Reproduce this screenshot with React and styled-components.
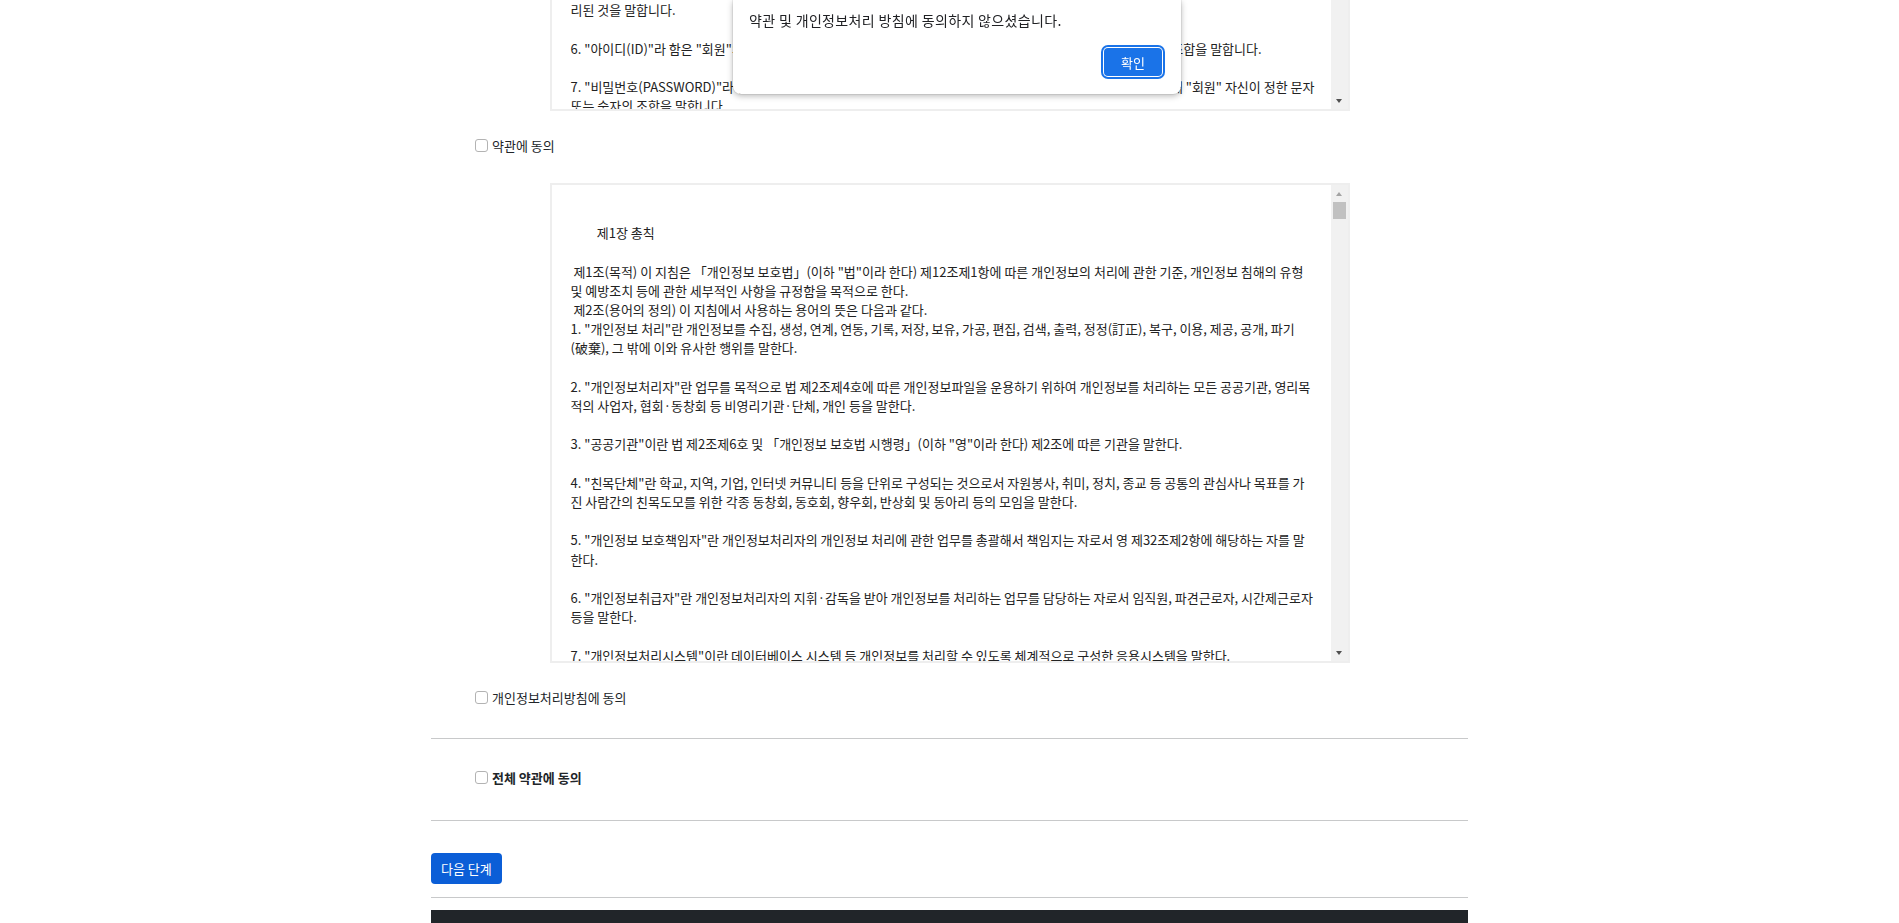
import React, { useLayoutEffect, useRef } from "react";
import styled, { createGlobalStyle } from "styled-components";

const GlobalStyle = createGlobalStyle`
  html, body { margin: 0; padding: 0; background: #ffffff; }
  body {
    font-family: "Noto Sans CJK KR", "Noto Sans", sans-serif;
    color: #212529;
  }
`;

const SERVICE_TERMS = [
  "제1조(목적)",
  '이 약관은 회사가 운영하는 온라인 서비스(이하 "서비스"라 한다)를 이용함에 있어 회사와 회원의 권리, 의무 및 책임사항을 규정함을',
  "목적으로 합니다.",
  "",
  "제2조(정의)",
  "이 약관에서 사용하는 용어의 정의는 다음과 같습니다.",
  '1. "서비스"라 함은 구현되는 단말기(PC, TV, 휴대형단말기 등의 각종 유무선 장치를 포함)와 상관없이 "회원"이 이용할 수 있는',
  "제반 서비스를 의미합니다.",
  "",
  '2. "회원"이라 함은 회사의 "서비스"에 접속하여 이 약관에 따라 "회사"와 이용계약을 체결하고 "회사"가 제공하는 "서비스"를',
  "이용하는 고객을 말합니다.",
  "",
  '3. "이용계약"이라 함은 "서비스" 이용과 관련하여 "회사"와 "회원" 간에 체결하는 계약을 말합니다.',
  "",
  '4. "이용자"라 함은 "회사"가 제공하는 "서비스"를 받는 "회원" 및 비회원을 말합니다.',
  "",
  '5. "게시물"이라 함은 "회원"이 "서비스"를 이용함에 있어 "서비스상"에 게시한 부호·문자·음성 형태의 글, 사진, 동영상 및 각종 파일과 링크 등으로 처',
  "리된 것을 말합니다.",
  "",
  '6. "아이디(ID)"라 함은 "회원"의 식별과 서비스 이용을 위하여 "회원"이 정하고 "회사"가 승인하는 문자와 숫자의 조합을 말합니다.',
  "",
  '7. "비밀번호(PASSWORD)"라 함은 "회원"이 부여 받은 "아이디"와 일치되는 "회원"임을 확인하고 비밀보호를 위해 "회원" 자신이 정한 문자',
  "또는 숫자의 조합을 말합니다.",
  "",
  '8. "탈퇴"라 함은 "회원"이 이용계약을 해지하는 것을 말합니다.',
  "",
  "제3조(약관의 효력 및 변경)",
  '1. 이 약관은 "서비스" 화면에 게시하거나 기타의 방법으로 "회원"에게 공지함으로써 효력이 발생합니다.',
];

const PRIVACY_POLICY = [
  "",
  "         제1장 총칙",
  "",
  ' 제1조(목적) 이 지침은 「개인정보 보호법」(이하 "법"이라 한다) 제12조제1항에 따른 개인정보의 처리에 관한 기준, 개인정보 침해의 유형',
  "및 예방조치 등에 관한 세부적인 사항을 규정함을 목적으로 한다.",
  " 제2조(용어의 정의) 이 지침에서 사용하는 용어의 뜻은 다음과 같다.",
  '1. "개인정보 처리"란 개인정보를 수집, 생성, 연계, 연동, 기록, 저장, 보유, 가공, 편집, 검색, 출력, 정정(訂正), 복구, 이용, 제공, 공개, 파기',
  "(破棄), 그 밖에 이와 유사한 행위를 말한다.",
  "",
  '2. "개인정보처리자"란 업무를 목적으로 법 제2조제4호에 따른 개인정보파일을 운용하기 위하여 개인정보를 처리하는 모든 공공기관, 영리목',
  "적의 사업자, 협회·동창회 등 비영리기관·단체, 개인 등을 말한다.",
  "",
  '3. "공공기관"이란 법 제2조제6호 및 「개인정보 보호법 시행령」(이하 "영"이라 한다) 제2조에 따른 기관을 말한다.',
  "",
  '4. "친목단체"란 학교, 지역, 기업, 인터넷 커뮤니티 등을 단위로 구성되는 것으로서 자원봉사, 취미, 정치, 종교 등 공통의 관심사나 목표를 가',
  "진 사람간의 친목도모를 위한 각종 동창회, 동호회, 향우회, 반상회 및 동아리 등의 모임을 말한다.",
  "",
  '5. "개인정보 보호책임자"란 개인정보처리자의 개인정보 처리에 관한 업무를 총괄해서 책임지는 자로서 영 제32조제2항에 해당하는 자를 말',
  "한다.",
  "",
  '6. "개인정보취급자"란 개인정보처리자의 지휘·감독을 받아 개인정보를 처리하는 업무를 담당하는 자로서 임직원, 파견근로자, 시간제근로자',
  "등을 말한다.",
  "",
  '7. "개인정보처리시스템"이란 데이터베이스 시스템 등 개인정보를 처리할 수 있도록 체계적으로 구성한 응용시스템을 말한다.',
  "",
  '8. "위탁자"란 개인정보 처리 업무를 위탁하는 개인정보처리자를 말한다.',
  "",
  '9. "수탁자"란 개인정보처리자로부터 개인정보 처리 업무를 위탁받은 자를 말한다.',
];

const LINE = 19.2;
const PAD = 19;

const Page = styled.main`
  width: 1037px;
  margin: 0 auto;
`;

const TermsBlock = styled.section`
  display: flex;
  flex-direction: column;
  margin-bottom: ${(p) => p.$after}px;
`;

const BoxFrame = styled.div`
  width: 800px;
  height: ${(p) => p.$height}px;
  margin: 0 auto;
  box-sizing: border-box;
  display: flex;
  background: #ffffff;
  border: 2px solid #eeeeee;
  border-top-width: ${(p) => (p.$cut ? 0 : 2)}px;
`;

const TermsText = styled.div`
  flex: 1;
  min-width: 0;
  overflow-x: hidden;
  overflow-y: scroll;
  scrollbar-width: none;
  &::-webkit-scrollbar { display: none; }
  padding: ${PAD}px;
  white-space: pre;
  font-size: 13px;
  line-height: ${LINE}px;
  color: #222222;
`;

const Rail = styled.div`
  width: 17px;
  flex: none;
  display: flex;
  flex-direction: column;
  background: #f1f1f1;
`;

const RailButton = styled.div`
  height: 17px;
  flex: none;
  display: flex;
  align-items: center;
  justify-content: center;
`;

const Arrow = styled.span`
  width: 0;
  height: 0;
  border-left: 3.5px solid transparent;
  border-right: 3.5px solid transparent;
  ${(p) =>
    p.$dir === "up"
      ? `border-bottom: 4px solid ${p.$color};`
      : `border-top: 4px solid ${p.$color};`}
`;

const Track = styled.div`
  flex: 1;
  display: flex;
  flex-direction: column;
`;

const Thumb = styled.div`
  height: 17px;
  margin: 0 2px;
  background: #c1c1c1;
`;

const CheckRow = styled.label`
  display: flex;
  align-items: center;
  gap: 4px;
  height: 20px;
  margin-top: ${(p) => p.$top || 0}px;
  padding-left: 44px;
  font-size: 13px;
  font-weight: ${(p) => (p.$bold ? 700 : 400)};
  color: #212529;
  cursor: pointer;
`;

const CheckBox = styled.input.attrs({ type: "checkbox" })`
  appearance: none;
  -webkit-appearance: none;
  box-sizing: border-box;
  width: 13px;
  height: 13px;
  margin: 0;
  border: 1px solid #b3b3b3;
  border-radius: 3px;
  background: #ffffff;
`;

const Divider = styled.hr`
  margin: 0;
  border: 0;
  height: 1px;
  background: #c8c9ca;
`;

const AllAgree = styled.div`
  padding: 28px 0 33px;
`;

const ButtonBar = styled.div`
  display: flex;
  padding: 32px 0 13px;
`;

const NextButton = styled.button`
  height: 31px;
  padding: 0 10px;
  border: 0;
  border-radius: 4px;
  background: #0b5ed7;
  color: #ffffff;
  font-family: inherit;
  font-size: 13px;
  cursor: pointer;
`;

const Footer = styled.footer`
  margin-top: 12px;
  height: 120px;
  background: #212529;
`;

const AlertDialog = styled.div`
  position: fixed;
  top: 0;
  left: 733px;
  width: 448px;
  height: 94px;
  box-sizing: border-box;
  padding: 10px 16px 15px;
  display: flex;
  flex-direction: column;
  justify-content: space-between;
  background: #ffffff;
  border-radius: 0 0 8px 8px;
  box-shadow: 0 2px 6px rgba(0, 0, 0, 0.28), 0 0 0 1px rgba(0, 0, 0, 0.06);
`;

const AlertMessage = styled.p`
  margin: 0;
  font-size: 14px;
  letter-spacing: 0.35px;
  line-height: 20px;
  color: #202124;
`;

const AlertActions = styled.div`
  display: flex;
  justify-content: flex-end;
  padding: 0 3px 3px 0;
`;

const AlertButton = styled.button`
  width: 58px;
  height: 28px;
  border: 0;
  border-radius: 4px;
  background: #1a73e8;
  color: #ffffff;
  font-family: inherit;
  font-size: 13px;
  box-shadow: 0 0 0 1px #ffffff, 0 0 0 3px #1a73e8;
`;

function ScrollRail({ showUp, thumb }) {
  return (
    <Rail>
      {showUp && (
        <RailButton>
          <Arrow $dir="up" $color="#a3a3a3" />
        </RailButton>
      )}
      <Track>{thumb && <Thumb />}</Track>
      <RailButton>
        <Arrow $dir="down" $color="#505050" />
      </RailButton>
    </Rail>
  );
}

function TermsBox({ lines, height, cut, startLine = 0, topOffset = 0 }) {
  const ref = useRef(null);
  useLayoutEffect(() => {
    if (ref.current && startLine > 0) {
      ref.current.scrollTop = PAD + startLine * LINE - topOffset;
    }
  }, [startLine, topOffset]);
  return (
    <BoxFrame $height={height} $cut={cut}>
      <TermsText ref={ref}>{lines.join("\n")}</TermsText>
      <ScrollRail showUp={!cut} thumb={!cut} />
    </BoxFrame>
  );
}

export default function App() {
  const tailStart = SERVICE_TERMS.indexOf("리된 것을 말합니다.");
  return (
    <>
      <GlobalStyle />
      <Page>
        <TermsBlock $after={28}>
          <TermsBox lines={SERVICE_TERMS} height={111} cut startLine={tailStart} topOffset={0.5} />
          <CheckRow $top={24}>
            <CheckBox />
            약관에 동의
          </CheckRow>
        </TermsBlock>
        <TermsBlock $after={31}>
          <TermsBox lines={PRIVACY_POLICY} height={480} />
          <CheckRow $top={24}>
            <CheckBox />
            개인정보처리방침에 동의
          </CheckRow>
        </TermsBlock>
        <Divider />
        <AllAgree>
          <CheckRow $bold>
            <CheckBox />
            전체 약관에 동의
          </CheckRow>
        </AllAgree>
        <Divider />
        <ButtonBar>
          <NextButton type="button">다음 단계</NextButton>
        </ButtonBar>
        <Divider />
        <Footer />
      </Page>
      <AlertDialog role="alertdialog">
        <AlertMessage>약관 및 개인정보처리 방침에 동의하지 않으셨습니다.</AlertMessage>
        <AlertActions>
          <AlertButton type="button">확인</AlertButton>
        </AlertActions>
      </AlertDialog>
    </>
  );
}
